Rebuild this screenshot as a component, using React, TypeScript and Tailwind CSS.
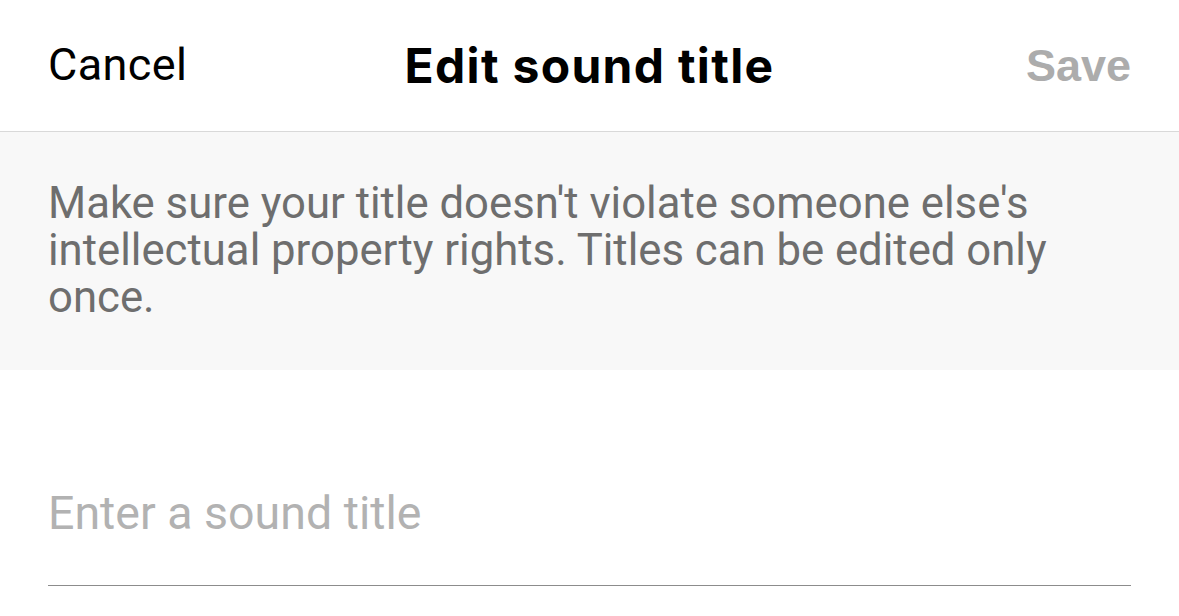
import React, { useState } from "react";

export default function App() {
  const [title, setTitle] = useState("");

  return (
    <div className="w-[1179px] h-[616px] bg-white overflow-hidden font-['Roboto',sans-serif]">
      <header className="h-[132px] grid grid-cols-[1fr_auto_1fr] items-center px-[48px] border-b border-[#d9d9d9]">
        <button className="justify-self-start text-[45px] text-black leading-none pb-[2px] tracking-[0.4px]">
          Cancel
        </button>
        <h1 className="text-[48px] font-bold text-black leading-none font-['Inter',sans-serif] tracking-[1.3px]">
          Edit sound title
        </h1>
        <button className="justify-self-end text-[45px] font-bold text-[#acacac] leading-none font-['Liberation_Sans',sans-serif]">
          Save
        </button>
      </header>

      <div className="bg-[#f8f8f8] h-[238px] px-[48px]">
        <p className="pt-[48px] text-[43.7px] leading-[47px] text-[#6e6e6e]">
          Make sure your title doesn't violate someone else's
          <br />
          intellectual property rights. Titles can be edited only
          <br />
          once.
        </p>
      </div>

      <div className="px-[48px] pt-[108px]">
        <input
          value={title}
          onChange={(e) => setTitle(e.target.value)}
          placeholder="Enter a sound title"
          className="w-full h-[108px] text-[46.5px] text-black placeholder:text-[#b2b2b2] outline-none border-b border-[#8c8c8c] pb-[38px]"
        />
      </div>
    </div>
  );
}
